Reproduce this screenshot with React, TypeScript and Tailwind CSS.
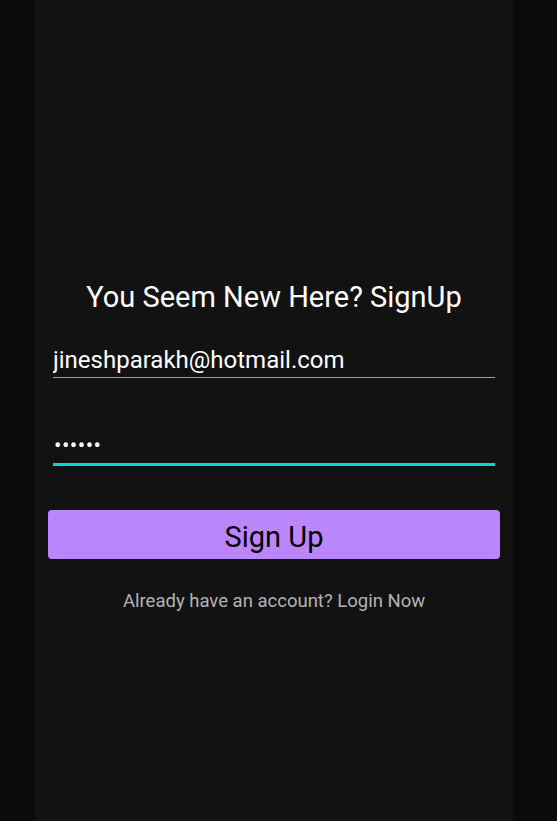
import React, { useState } from 'react';

export default function App() {
  const [email, setEmail] = useState('jineshparakh@hotmail.com');
  const [password, setPassword] = useState('123456');

  return (
    <div className="w-full h-[821px] bg-[#0b0b0b]" style={{ fontFamily: 'Roboto, "Noto Sans", sans-serif' }}>
      <div className="ml-[35px] w-[478px] h-full bg-[#121212] flex flex-col px-[13px] pt-[279px]">
        {/* Title */}
        <h1 className="text-white text-[29px] leading-[36px] text-center">You Seem New Here? SignUp</h1>

        {/* Email */}
        <div className="mx-[5px] mt-[27px] border-b border-[#9e9e9e]">
          <input
            value={email}
            onChange={(e) => setEmail(e.target.value)}
            className="w-full bg-transparent text-white text-[24px] leading-[32px] outline-none pt-[2px] pb-[1px]"
          />
        </div>

        {/* Password */}
        <div className="mx-[5px] mt-[52px] border-b-[3px] border-[#03dac5]">
          <input
            type="password"
            value={password}
            onChange={(e) => setPassword(e.target.value)}
            className="w-full bg-transparent text-white text-[22px] leading-[32px] outline-none pl-[1px] pb-[1px] tracking-[0.5px]"
          />
        </div>

        {/* Button */}
        <button className="mt-[44px] h-[49px] w-full rounded-[4px] bg-[#bb86fc] text-black text-[29px] leading-none pt-[5px]">
          Sign Up
        </button>

        <p className="mt-[30px] text-center text-[#b3b3b3] text-[18.5px] leading-[24px]">
          Already have an account? Login Now
        </p>
      </div>
    </div>
  );
}
